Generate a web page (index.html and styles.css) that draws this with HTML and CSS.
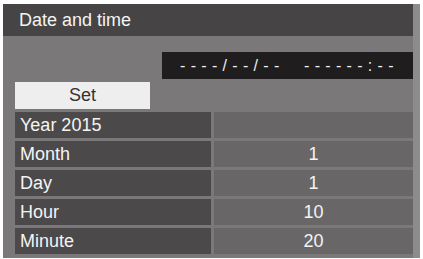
FILE: index.html
```html
<!DOCTYPE html>
<html>
<head>
<meta charset="utf-8">
<link rel="stylesheet" href="styles.css">
</head>
<body>
<div class="panel">
  <div class="title">Date and time</div>
  <div class="content">
    <div class="clock-row">
      <div class="clock">----/--/--  ------:--</div>
    </div>
    <div class="set-row">
      <div class="set">Set</div>
    </div>
    <div class="rows">
      <div class="row"><div class="label">Year 2015</div><div class="value"></div></div>
      <div class="row"><div class="label">Month</div><div class="value">1</div></div>
      <div class="row"><div class="label">Day</div><div class="value">1</div></div>
      <div class="row"><div class="label">Hour</div><div class="value">10</div></div>
      <div class="row"><div class="label">Minute</div><div class="value">20</div></div>
    </div>
  </div>
</div>
</body>
</html>
```
FILE: styles.css
```css
html, body {
  margin: 0;
  padding: 0;
  background: #ffffff;
}
body {
  font-family: "Liberation Sans", Arial, sans-serif;
  color: #f4f4f4;
}
.panel {
  margin: 4px 0 0 3px;
  width: 410px;
  height: 254px;
  background: #7a7878;
  border-right: 7px solid #8d8b8b;
  display: flex;
  flex-direction: column;
}
.title {
  height: 32px;
  background: #464445;
  font-size: 18px;
  line-height: 32px;
  padding-left: 16px;
  box-sizing: border-box;
  flex: none;
}
.content {
  padding: 16px 0 4px 12px;
  display: flex;
  flex-direction: column;
  gap: 3px;
}
.clock-row {
  display: flex;
  justify-content: flex-end;
}
.clock {
  width: 251px;
  height: 27px;
  background: #1f1d1e;
  color: #eeeeee;
  font-size: 16px;
  line-height: 27px;
  white-space: pre;
  letter-spacing: 5.3px;
  padding-left: 18px;
  box-sizing: border-box;
}
.set-row {
  display: flex;
}
.set {
  width: 135px;
  height: 27px;
  background: #efeeee;
  color: #333333;
  font-size: 18px;
  line-height: 27px;
  text-align: center;
}
.rows {
  display: flex;
  flex-direction: column;
  gap: 3px;
}
.row {
  display: flex;
  gap: 3px;
  height: 26px;
}
.label {
  width: 196px;
  background: #4c494a;
  font-size: 18px;
  line-height: 26px;
  padding-left: 5px;
  box-sizing: border-box;
}
.value {
  width: 199px;
  background: #686666;
  font-size: 18px;
  line-height: 26px;
  text-align: center;
}
```
